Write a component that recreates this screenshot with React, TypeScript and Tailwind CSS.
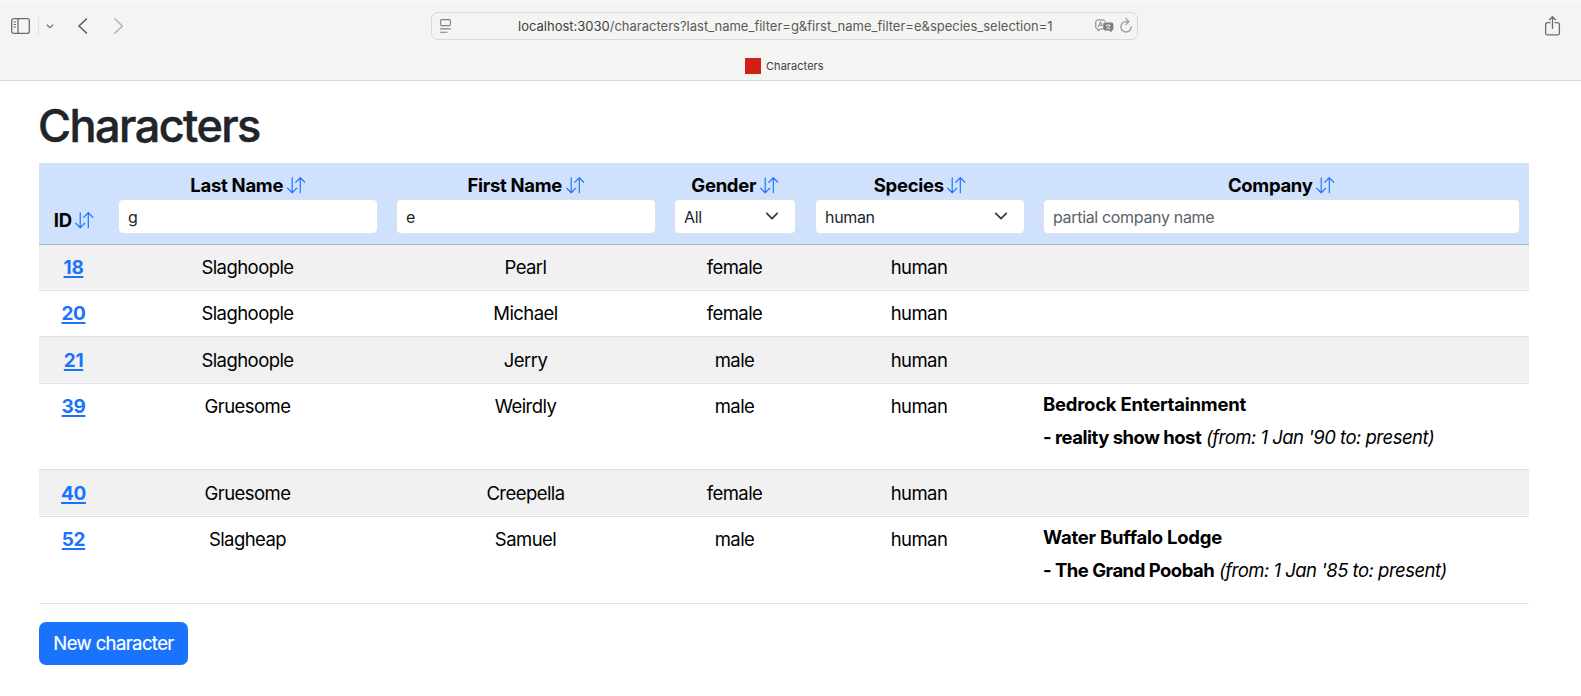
import type { ReactNode } from 'react';
import { BsArrowDownUp } from 'react-icons/bs';

type Job = { company: string; role: string; period: string };
type Character = {
  id: number;
  last: string;
  first: string;
  gender: string;
  species: string;
  spacing: string;
  job?: Job;
};

const characters: Character[] = [
  { id: 18, last: 'Slaghoople', first: 'Pearl', gender: 'female', species: 'human', spacing: 'h-[46px] *:pt-[8px]' },
  { id: 20, last: 'Slaghoople', first: 'Michael', gender: 'female', species: 'human', spacing: 'h-[46px] *:pt-[8px]' },
  { id: 21, last: 'Slaghoople', first: 'Jerry', gender: 'male', species: 'human', spacing: 'h-[47px] *:pt-[9px]' },
  {
    id: 39, last: 'Gruesome', first: 'Weirdly', gender: 'male', species: 'human', spacing: 'h-[86px] *:pt-[8px]',
    job: { company: 'Bedrock Entertainment', role: 'reality show host', period: "(from: 1 Jan '90 to: present)" },
  },
  { id: 40, last: 'Gruesome', first: 'Creepella', gender: 'female', species: 'human', spacing: 'h-[47px] *:pt-[9px]' },
  {
    id: 52, last: 'Slagheap', first: 'Samuel', gender: 'male', species: 'human', spacing: 'h-[87px] *:pt-[8px]',
    job: { company: 'Water Buffalo Lodge', role: 'The Grand Poobah', period: "(from: 1 Jan '85 to: present)" },
  },
];

function Toolbar() {
  return (
    <header className="h-[81px] border-t border-b border-t-[#fafafa] border-b-[#d6d6d6] bg-[#f4f4f2]">
      <div className="flex h-[50px] items-center">
        <div className="flex w-[431px] items-center">
          <svg className="ml-[11px] h-4 w-[19px]" viewBox="0 0 19 16" fill="none" stroke="#6c6c6a" strokeWidth="1.3">
            <rect x="0.7" y="0.7" width="17.6" height="14.6" rx="2" />
            <path d="M7 0.7V15.3" />
            <path d="M2.6 4H5M2.6 6.5H5M2.6 9H5" strokeWidth="1" />
          </svg>
          <span className="ml-2 h-[18px] w-px bg-[#e2e2e0]" />
          <svg className="ml-[7px] h-[5px] w-2" viewBox="0 0 8 5" fill="none" stroke="#858583" strokeWidth="1.5" strokeLinecap="round" strokeLinejoin="round">
            <path d="M1.2 1L4 3.7L6.8 1" />
          </svg>
          <svg className="ml-6 h-4 w-[10px]" viewBox="0 0 10 16" fill="none" stroke="#5c5c5a" strokeWidth="1.6" strokeLinecap="round" strokeLinejoin="round">
            <path d="M8.4 1L1 8L8.4 15" />
          </svg>
          <svg className="ml-[26px] h-4 w-[10px]" viewBox="0 0 10 16" fill="none" stroke="#b4b4b2" strokeWidth="1.6" strokeLinecap="round" strokeLinejoin="round">
            <path d="M1 1L8.4 8L1 15" />
          </svg>
        </div>
        <div className="flex h-7 w-[707px] items-center rounded-[7px] border border-[#d8d8d6]">
          <svg className="ml-2 h-[14px] w-[11px]" viewBox="0 0 11 14" fill="none" stroke="#80807e" strokeWidth="1.1" strokeLinecap="round">
            <rect x="0.6" y="0.6" width="9.8" height="6" rx="1.2" />
            <path d="M0.6 9.9H10.4M0.6 13.2H7" />
          </svg>
          <span className="ml-[67px] w-[577px] pt-[2px] text-[13px] whitespace-nowrap text-[#5b5b59]">
            <span className="text-[#3f3f3d]">localhost:3030</span>
            /characters?last_name_filter=g&amp;first_name_filter=e&amp;species_selection=1
          </span>
          <svg className="h-[14px] w-[19px] shrink-0" viewBox="0 0 19 14" fill="none">
            <path d="M8 10H5.5L3.2 12V10H2.8A2 2 0 0 1 0.8 8V3A2 2 0 0 1 2.8 1H8.5A2 2 0 0 1 10.3 2.6" stroke="#7c7c7a" />
            <path d="M3.2 8L5.6 2.8L7.4 7M4 6.3H6.8" stroke="#7c7c7a" strokeWidth="0.9" />
            <path d="M10 3.4H16.4A2 2 0 0 1 18.4 5.4V9.6A2 2 0 0 1 16.6 11.6V13.6L14.2 11.6H10A1.8 1.8 0 0 1 8.2 9.8V5.2A1.8 1.8 0 0 1 10 3.4Z" fill="#7c7c7a" />
            <path d="M11 6.2H15.6M13.2 5V6.2M11.6 9.9C13.6 9 14.7 7.8 15 6.3M11.5 6.3C12 8 13.4 9.3 15.3 9.9" stroke="#f4f4f2" strokeWidth="0.8" />
          </svg>
          <svg className="ml-[6px] h-[15px] w-3 shrink-0 -translate-y-px overflow-visible" viewBox="0 0 12 15" fill="none" stroke="#9a9a98" strokeWidth="1.3" strokeLinecap="round" strokeLinejoin="round">
            <path d="M8.8 3.6H6A5.2 5.2 0 1 0 11.2 8.8" />
            <path d="M5.8 0.6L8.8 3.6L5.8 6.6" />
          </svg>
        </div>
        <svg className="-mt-px ml-[407px] h-5 w-4" viewBox="0 0 16 20" fill="none" stroke="#6c6c6a" strokeWidth="1.3" strokeLinecap="round" strokeLinejoin="round">
          <path d="M5 6.7H2.3A1.7 1.7 0 0 0 0.6 8.4V17.2A1.7 1.7 0 0 0 2.3 18.9H12.7A1.7 1.7 0 0 0 14.4 17.2V8.4A1.7 1.7 0 0 0 12.7 6.7H10" />
          <path d="M7.5 12.4V1M4.5 3.8L7.5 0.8L10.5 3.8" />
        </svg>
      </div>
      <div className="flex h-[29px] items-center pl-[745px]">
        <span className="mt-px size-4 bg-[#d12015]" />
        <span className="mt-px ml-[5px] text-[11px] tracking-[0.05px] text-[#3f3f3d]">Characters</span>
      </div>
    </header>
  );
}

function Heading({ label, padding = 'pr-[9.5px] pl-[9px]', children }: { label: string; padding?: string; children?: ReactNode }) {
  return (
    <th className={`border-b border-[#a6b5cc] pb-[10px] align-bottom font-bold ${padding}`}>
      <div className="flex h-7 items-center justify-center gap-[3.5px] tracking-[-0.3px]">
        <span className={children ? 'pt-[1px]' : ''}>{label}</span>
        <BsArrowDownUp className={`size-[18.5px] text-[#1a73fc] ${children ? 'mt-[2px]' : 'mt-[1px]'}`} />
      </div>
      {children}
    </th>
  );
}

const control =
  'mt-[1px] flex h-[35px] w-full items-center rounded-[5px] border border-[#dee2e6] bg-white px-[9px] text-left text-[16px] font-normal tracking-[-0.33px] text-[#212529]';

function TextFilter({ value, placeholder }: { value?: string; placeholder?: string }) {
  return <input className={`${control} placeholder:text-[#5d6268] placeholder:opacity-100`} defaultValue={value} placeholder={placeholder} />;
}

function SelectFilter({ value }: { value: string }) {
  return (
    <button type="button" className={`${control} justify-between`}>
      <span>{value}</span>
      <svg className="-mt-[2px] mr-[7px] size-[14px]" viewBox="0 0 16 16" fill="none" stroke="#343a40" strokeWidth="2" strokeLinecap="round" strokeLinejoin="round">
        <path d="m2 5 6 6 6-6" />
      </svg>
    </button>
  );
}

function Row({ c, striped }: { c: Character; striped: boolean }) {
  const cell = `border-b border-[#dee2e6] pr-px align-top ${striped ? 'bg-[#f1f1f1] shadow-[inset_0_-1px_0_#fafafa]' : 'bg-white'}`;
  return (
    <tr className={c.spacing}>
      <td className={cell}>
        <a href={`#${c.id}`} className="text-[19px] font-bold tracking-[-0.4px] text-[#1a73fc] underline decoration-2 underline-offset-[1.5px] [text-decoration-skip-ink:none]">{c.id}</a>
      </td>
      <td className={cell}>{c.last}</td>
      <td className={cell}>{c.first}</td>
      <td className={cell}>{c.gender}</td>
      <td className={cell}>{c.species}</td>
      <td className={`${cell} pl-[9px] text-left`}>
        {c.job && (
          <div className="-mt-[4px] leading-[33px] tracking-[-0.51px] whitespace-nowrap">
            <div className="font-bold tracking-[-0.23px]">{c.job.company}</div>
            <div>
              <b>- {c.job.role}</b> <i>{c.job.period}</i>
            </div>
          </div>
        )}
      </td>
    </tr>
  );
}

export default function App() {
  return (
    <div className="h-[696px] overflow-hidden bg-white font-['Inter','Liberation_Sans',sans-serif] text-black">
      <Toolbar />
      <main className="px-[39px] pt-[17px]">
        <h1 className="-ml-[1px] h-[65px] text-[45px] leading-[56px] font-medium tracking-[-1.55px] text-[#212529] [-webkit-text-stroke:0.5px_#212529]">Characters</h1>
        <table className="w-[1490px] table-fixed border-separate border-spacing-0 text-center text-[18.5px] leading-7 tracking-[-0.56px]">
          <colgroup>
            <col className="w-[70px]" />
            <col className="w-[278px]" />
            <col className="w-[278px]" />
            <col className="w-[140px]" />
            <col className="w-[229px]" />
            <col className="w-[495px]" />
          </colgroup>
          <thead>
            <tr className="h-[82px] bg-[#d0e1fd]">
              <Heading label="ID" />
              <Heading label="Last Name"><TextFilter value="g" /></Heading>
              <Heading label="First Name"><TextFilter value="e" /></Heading>
              <Heading label="Gender"><SelectFilter value="All" /></Heading>
              <Heading label="Species" padding="pr-[9.5px] pl-[10px]"><SelectFilter value="human" /></Heading>
              <Heading label="Company"><TextFilter placeholder="partial company name" /></Heading>
            </tr>
          </thead>
          <tbody>
            {characters.map((c, i) => (
              <Row key={c.id} c={c} striped={i % 2 === 0} />
            ))}
          </tbody>
        </table>
        <button type="button" className="mt-[18px] h-[43px] w-[149px] rounded-[7px] bg-[#1a73fc] text-[18.5px] tracking-[-0.6px] whitespace-nowrap text-white [-webkit-text-stroke:0.2px_white]">
          New character
        </button>
      </main>
    </div>
  );
}
